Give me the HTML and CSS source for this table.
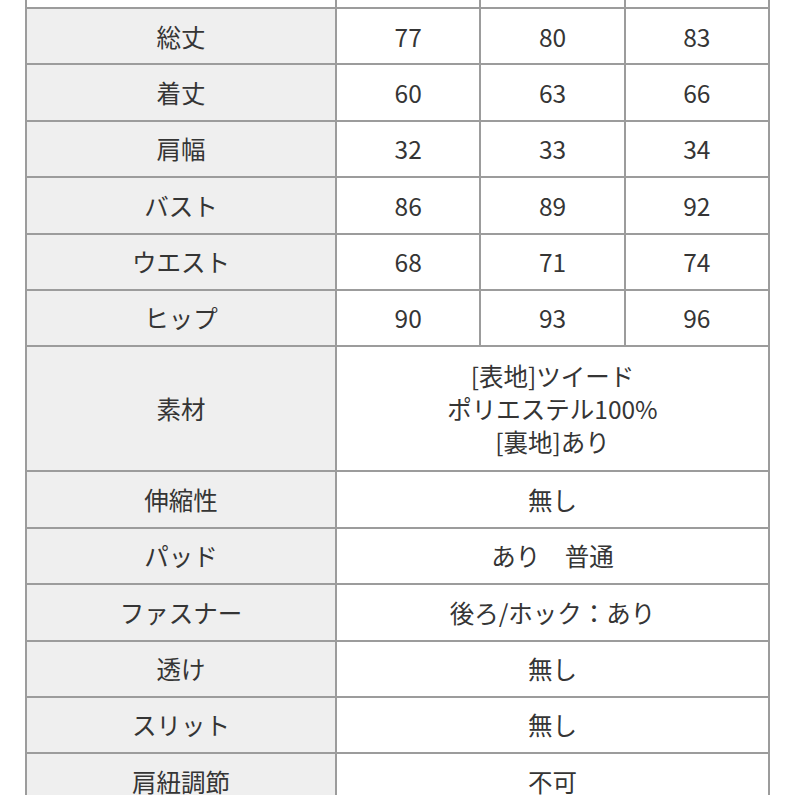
FILE: index.html
```html
<!DOCTYPE html>
<html lang="ja">
<head>
<meta charset="utf-8">
<link rel="stylesheet" href="styles.css">
</head>
<body>
<div class="page">
<table class="size-table">
  <tr class="top-row"><td class="label blank"></td><td></td><td></td><td></td></tr>
  <tr><th class="label">総丈</th><td>77</td><td>80</td><td>83</td></tr>
  <tr><th class="label">着丈</th><td>60</td><td>63</td><td>66</td></tr>
  <tr><th class="label">肩幅</th><td>32</td><td>33</td><td>34</td></tr>
  <tr><th class="label">バスト</th><td>86</td><td>89</td><td>92</td></tr>
  <tr><th class="label">ウエスト</th><td>68</td><td>71</td><td>74</td></tr>
  <tr><th class="label">ヒップ</th><td>90</td><td>93</td><td>96</td></tr>
  <tr class="tall"><th class="label">素材</th><td colspan="3" class="multi">[表地]ツイード<br>ポリエステル100%<br>[裏地]あり</td></tr>
  <tr><th class="label">伸縮性</th><td colspan="3">無し</td></tr>
  <tr><th class="label">パッド</th><td colspan="3">あり　普通</td></tr>
  <tr><th class="label">ファスナー</th><td colspan="3">後ろ/ホック：あり</td></tr>
  <tr><th class="label">透け</th><td colspan="3">無し</td></tr>
  <tr><th class="label">スリット</th><td colspan="3">無し</td></tr>
  <tr><th class="label">肩紐調節</th><td colspan="3">不可</td></tr>
</table>
</div>
</body>
</html>
```
FILE: styles.css
```css
html, body {
  margin: 0;
  padding: 0;
  background: #ffffff;
}
.page {
  height: 795px;
  overflow: hidden;
  padding-left: 25px;
}
.size-table {
  border-collapse: collapse;
  table-layout: fixed;
  width: 745px;
  font-family: "Noto Sans CJK JP", "Noto Sans", sans-serif;
  font-size: 24.5px;
  color: #353535;
}
.size-table th,
.size-table td {
  border: 2.5px solid #9c9c9c;
  text-align: center;
  vertical-align: middle;
  font-weight: 400;
  padding: 0;
  height: 54.4px;
  line-height: 1.2;
}
.size-table th.label,
.size-table td.label {
  width: 308px;
  background: #efefef;
}
.size-table td.label.blank {
  background: #ffffff;
}
.size-table tr.top-row td {
  height: 7px;
  border-top: none;
}
.size-table tr.tall th,
.size-table tr.tall td {
  height: 123px;
}
.size-table td.multi {
  line-height: 33px;
}
```
